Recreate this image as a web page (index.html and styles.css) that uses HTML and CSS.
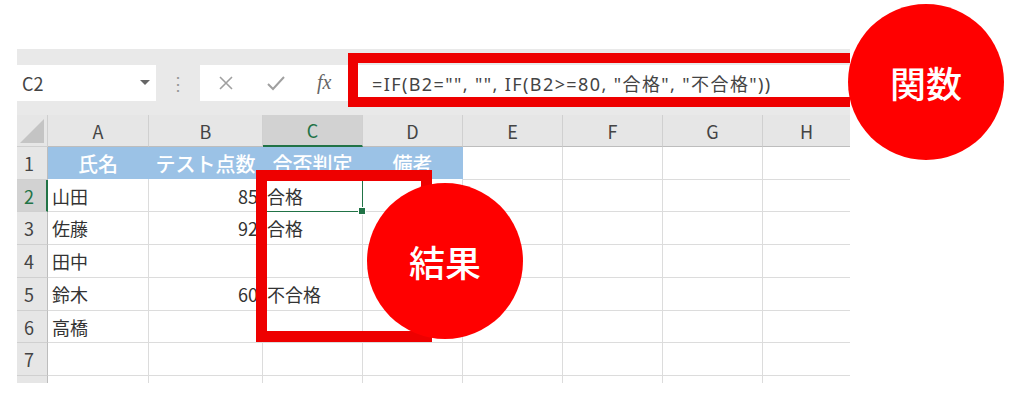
FILE: index.html
```html
<!DOCTYPE html>
<html lang="ja">
<head>
  <meta charset="UTF-8">
  <title>IF関数の例</title>
  <link rel="stylesheet" href="styles.css">
</head>
<body>
  <div class="sheet">
    <div class="toolbar">
      <div class="namebox">
        <span>C2</span>
        <span class="caret"></span>
      </div>
      <div class="grip">⋮</div>
      <div class="formula">
        <div class="fbtns">
          <svg width="18" height="18" viewBox="0 0 18 18"><path d="M3 3 L15 15 M15 3 L3 15" stroke="#a0a0a0" stroke-width="1.6" fill="none"/></svg>
          <svg width="20" height="18" viewBox="0 0 20 18"><path d="M2 10 L7 15 L18 3" stroke="#a0a0a0" stroke-width="2" fill="none"/></svg>
          <span class="fx">fx</span>
        </div>
        <div class="ftext">=IF(B2="", "", IF(B2&gt;=80, "合格", "不合格"))</div>
      </div>
    </div>

    <div class="grid">
      <div class="corner"></div>
      <div class="colhead">A</div>
      <div class="colhead">B</div>
      <div class="colhead active">C</div>
      <div class="colhead">D</div>
      <div class="colhead">E</div>
      <div class="colhead">F</div>
      <div class="colhead">G</div>
      <div class="colhead last">H</div>

      <div class="rowhead">1</div>
      <div class="cell title">氏名</div>
      <div class="cell title">テスト点数</div>
      <div class="cell title">合否判定</div>
      <div class="cell title">備考</div>
      <div class="cell"></div><div class="cell"></div><div class="cell"></div><div class="cell last"></div>

      <div class="rowhead active">2</div>
      <div class="cell">山田</div>
      <div class="cell num">85</div>
      <div class="cell selected">合格<span class="handle"></span></div>
      <div class="cell"></div><div class="cell"></div><div class="cell"></div><div class="cell"></div><div class="cell last"></div>

      <div class="rowhead">3</div>
      <div class="cell">佐藤</div>
      <div class="cell num">92</div>
      <div class="cell">合格</div>
      <div class="cell"></div><div class="cell"></div><div class="cell"></div><div class="cell"></div><div class="cell last"></div>

      <div class="rowhead">4</div>
      <div class="cell">田中</div>
      <div class="cell num"></div>
      <div class="cell"></div>
      <div class="cell"></div><div class="cell"></div><div class="cell"></div><div class="cell"></div><div class="cell last"></div>

      <div class="rowhead">5</div>
      <div class="cell">鈴木</div>
      <div class="cell num">60</div>
      <div class="cell">不合格</div>
      <div class="cell"></div><div class="cell"></div><div class="cell"></div><div class="cell"></div><div class="cell last"></div>

      <div class="rowhead">6</div>
      <div class="cell">高橋</div>
      <div class="cell num"></div>
      <div class="cell"></div>
      <div class="cell"></div><div class="cell"></div><div class="cell"></div><div class="cell"></div><div class="cell last"></div>

      <div class="rowhead">7</div>
      <div class="cell"></div><div class="cell"></div><div class="cell"></div><div class="cell"></div>
      <div class="cell"></div><div class="cell"></div><div class="cell"></div><div class="cell last"></div>

      <div class="rowhead stub"></div>
      <div class="cell stub"></div><div class="cell stub"></div><div class="cell stub"></div><div class="cell stub"></div>
      <div class="cell stub"></div><div class="cell stub"></div><div class="cell stub"></div><div class="cell stub last"></div>
    </div>

    <!-- 注記 -->
    <div class="mark-formula"></div>
    <div class="mark-result"></div>
    <div class="badge badge-func">関数</div>
    <div class="badge badge-result">結果</div>
  </div>
</body>
</html>
```

FILE: styles.css
```css
body {
  margin: 0;
  background: #fff;
  font-family: "Noto Sans CJK JP", "Noto Sans", sans-serif;
  color: #333;
}

.sheet {
  position: relative;
  width: 833px;
  margin: 49px 0 0 17px;
  background: #e9e9e9;
  height: 334px;
}

.toolbar {
  display: flex;
  align-items: center;
  height: 66px;
}

.namebox {
  box-sizing: border-box;
  width: 139px;
  height: 36px;
  margin-top: 1px;
  background: #fff;
  display: flex;
  align-items: center;
  justify-content: space-between;
  padding: 0 6px 0 5px;
  font-size: 18px;
  color: #444;
}

.caret {
  width: 0;
  height: 0;
  border-left: 5px solid transparent;
  border-right: 5px solid transparent;
  border-top: 5px solid #666;
}

.grip {
  width: 44px;
  text-align: center;
  color: #999;
  font-size: 18px;
}

.formula {
  flex: 1;
  height: 36px;
  margin-top: 1px;
  background: #fff;
  display: flex;
  align-items: center;
}

.fbtns {
  display: flex;
  align-items: center;
  gap: 31px;
  width: 148px;
  padding-left: 17px;
  box-sizing: border-box;
}

.fx {
  font-family: "Liberation Serif", serif;
  font-style: italic;
  font-size: 20px;
  color: #666;
}

.ftext {
  padding-left: 24px;
  font-family: "Noto Sans", "Noto Sans CJK JP", sans-serif;
  font-size: 18px;
  letter-spacing: 1.4px;
  color: #444;
  white-space: nowrap;
}

.grid {
  display: grid;
  grid-template-columns: 31px 101px 114px 100px 100px 100px 100px 100px 87px;
  grid-template-rows: 32px 33px 32px 33px 33px 33px 32px 33px 7px;
}

.corner {
  position: relative;
  background: #e6e6e6;
  border-right: 1px solid #cfcfcf;
  border-bottom: 1px solid #cfcfcf;
}

.corner::after {
  content: "";
  position: absolute;
  right: 3px;
  bottom: 3px;
  border-left: 24px solid transparent;
  border-bottom: 24px solid #c4c4c4;
}

.colhead {
  background: #e6e6e6;
  border-right: 1px solid #d0d0d0;
  border-bottom: 1px solid #bdbdbd;
  display: flex;
  align-items: center;
  justify-content: center;
  font-size: 18px;
  color: #444;
}

.colhead.active {
  background: #d2d2d2;
  border-bottom: 2px solid #217346;
  color: #217346;
}

.colhead.last {
  border-right: none;
}

.rowhead {
  background: #e6e6e6;
  border-right: 1px solid #bdbdbd;
  border-bottom: 1px solid #d0d0d0;
  display: flex;
  align-items: center;
  padding-left: 7px;
  font-size: 18px;
  color: #444;
}

.rowhead.active {
  background: #d2d2d2;
  color: #217346;
  border-right: 2px solid #217346;
}

.cell {
  position: relative;
  background: #fff;
  border-right: 1px solid #dcdcdc;
  border-bottom: 1px solid #dcdcdc;
  display: flex;
  align-items: center;
  padding: 0 4px;
  font-size: 18px;
  color: #333;
  white-space: nowrap;
}

.cell.last {
  border-right: none;
}

.cell.title {
  background: #9bc2e6;
  color: #fff;
  font-size: 20px;
  font-weight: 500;
  justify-content: center;
  border-right-color: #9bc2e6;
  border-bottom-color: #fff;
}

.cell.num {
  justify-content: flex-end;
}

.cell.selected {
  outline: 2px solid #217346;
  outline-offset: -1px;
}

.handle {
  position: absolute;
  right: -4px;
  bottom: -4px;
  width: 6px;
  height: 6px;
  background: #217346;
  border: 1px solid #fff;
  z-index: 1;
}

.stub {
  border-bottom: none;
}

.mark-formula {
  position: absolute;
  left: 331px;
  top: 4px;
  width: 502px;
  height: 54px;
  box-sizing: border-box;
  border: 10px solid #ee0000;
  border-right: none;
}

.mark-result {
  position: absolute;
  left: 239px;
  top: 121px;
  width: 176px;
  height: 172px;
  box-sizing: border-box;
  border: 11px solid #ee0000;
}

.badge {
  position: absolute;
  width: 156px;
  height: 156px;
  border-radius: 50%;
  background: #ff0000;
  color: #fff;
  font-weight: 500;
  font-size: 36px;
  display: flex;
  align-items: center;
  justify-content: center;
}

.badge-func {
  left: 831px;
  top: -45px;
}

.badge-result {
  left: 350px;
  top: 134px;
}
```
